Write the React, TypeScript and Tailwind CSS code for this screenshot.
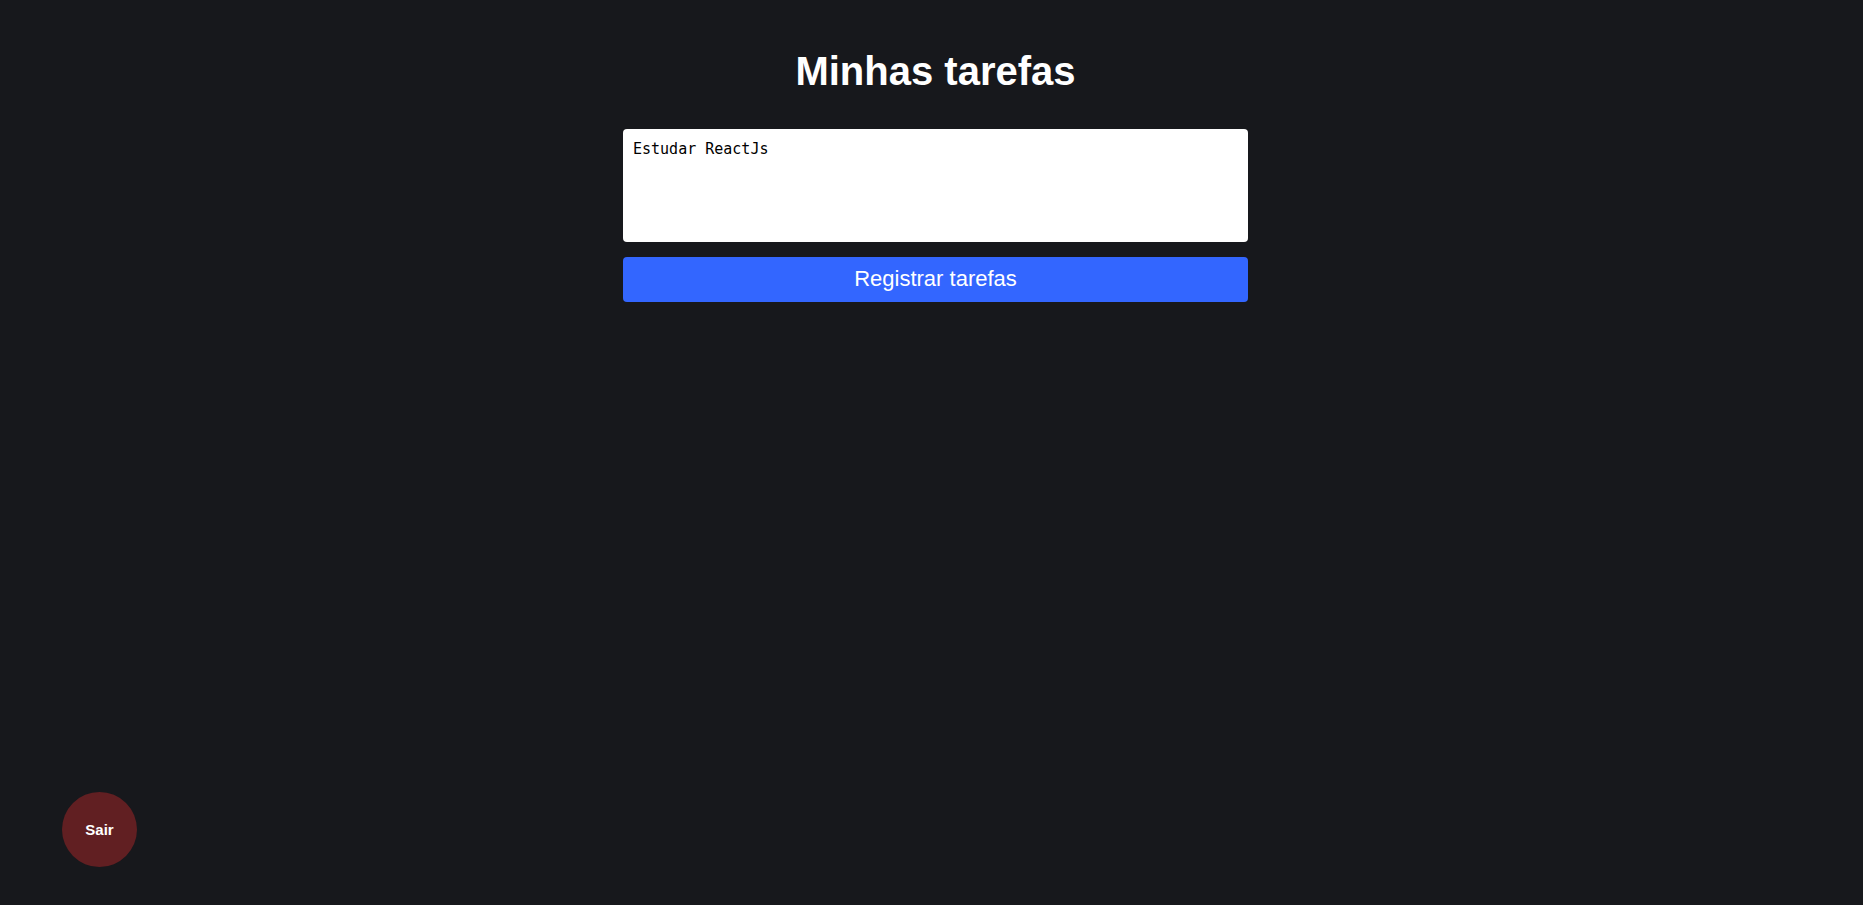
import { useState } from "react";

export default function App() {
  const [task, setTask] = useState("Estudar ReactJs");

  return (
    <div className="min-h-screen w-full bg-[#17181c] font-['Liberation_Sans',Arial,sans-serif]">
      <main className="flex flex-col items-center pl-2 pt-[44px]">
        <h1 className="text-[40px] font-bold leading-[54px] text-white">
          Minhas tarefas
        </h1>

        <form
          className="mt-[31px] flex w-[625px] flex-col gap-[15px]"
          onSubmit={(e) => e.preventDefault()}
        >
          <textarea
            value={task}
            onChange={(e) => setTask(e.target.value)}
            className="h-[113px] w-full resize-none rounded-[4px] bg-white px-[10px] py-[10px] font-['DejaVu_Sans_Mono',monospace] text-[15px] leading-[20px] text-black outline-none"
          />
          <button
            type="submit"
            className="h-[45px] w-full rounded-[4px] bg-[#3366ff] pb-[2px] text-[22px] text-white"
          >
            Registrar tarefas
          </button>
        </form>
      </main>

      {/* Sair */}
      <button className="fixed bottom-[38px] left-[62px] flex h-[75px] w-[75px] items-center justify-center rounded-full bg-[#611f22] pt-[2px] text-[15px] font-bold text-white">
        Sair
      </button>
    </div>
  );
}
